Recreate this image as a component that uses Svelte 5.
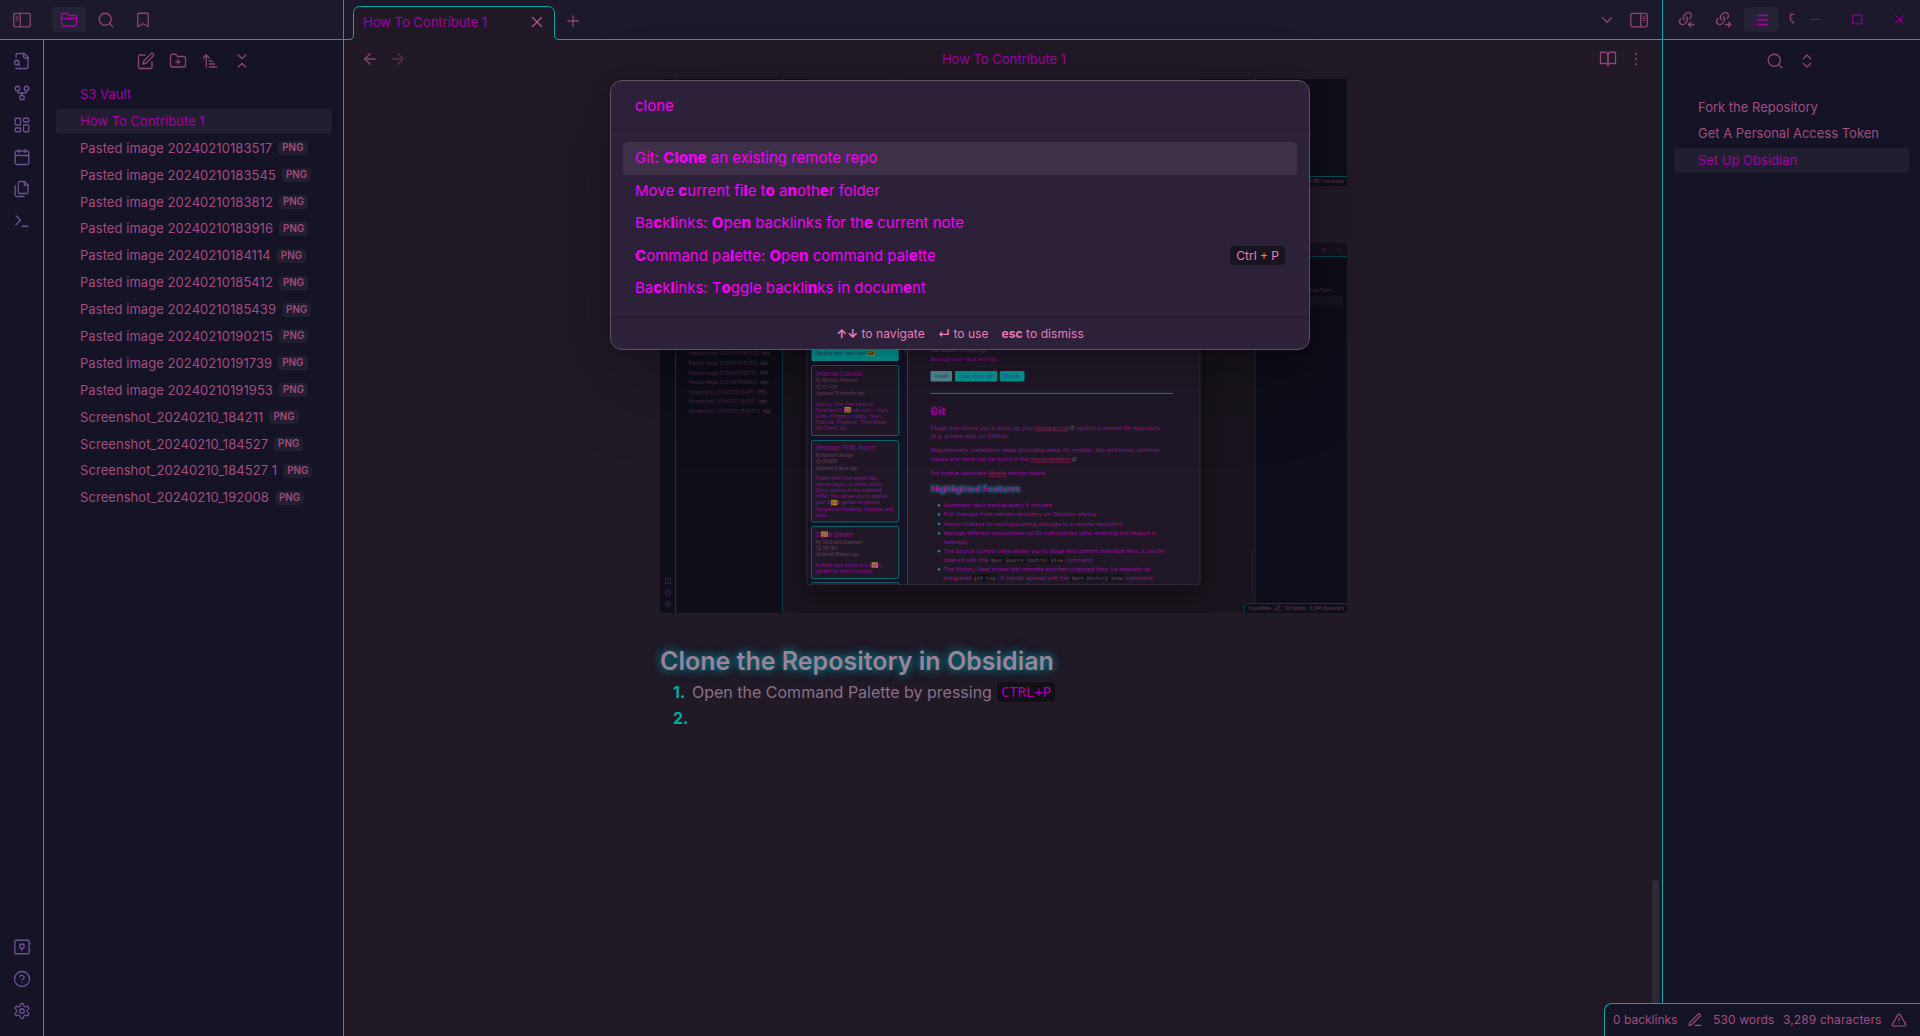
<script>
  const icons = {
    folder: ['M20 20a2 2 0 0 0 2-2V8a2 2 0 0 0-2-2h-7.9a2 2 0 0 1-1.69-.9L9.6 3.9A2 2 0 0 0 7.93 3H4a2 2 0 0 0-2 2v13a2 2 0 0 0 2 2Z', 'M2 10h20'],
    search: ['M11 3a8 8 0 1 0 0 16a8 8 0 1 0 0-16', 'm21 21-4.3-4.3'],
    bookmark: ['m19 21-7-4-7 4V5a2 2 0 0 1 2-2h10a2 2 0 0 1 2 2v16z'],
    fileSearch: ['M4 22h14a2 2 0 0 0 2-2V7l-5-5H6a2 2 0 0 0-2 2v3', 'M14 2v4a2 2 0 0 0 2 2h4', 'M5 11a3 3 0 1 0 0 6a3 3 0 1 0 0-6', 'm9 18-1.5-1.5'],
    fork: ['M12 15a3 3 0 1 0 0 6a3 3 0 1 0 0-6', 'M6 3a3 3 0 1 0 0 6a3 3 0 1 0 0-6', 'M18 3a3 3 0 1 0 0 6a3 3 0 1 0 0-6', 'M18 9v2c0 .6-.4 1-1 1H7c-.6 0-1-.4-1-1V9', 'M12 12v3'],
    dashboard: ['M4 3h5a1 1 0 0 1 1 1v7a1 1 0 0 1-1 1H4a1 1 0 0 1-1-1V4a1 1 0 0 1 1-1z', 'M15 3h5a1 1 0 0 1 1 1v3a1 1 0 0 1-1 1h-5a1 1 0 0 1-1-1V4a1 1 0 0 1 1-1z', 'M15 12h5a1 1 0 0 1 1 1v7a1 1 0 0 1-1 1h-5a1 1 0 0 1-1-1v-7a1 1 0 0 1 1-1z', 'M4 16h5a1 1 0 0 1 1 1v3a1 1 0 0 1-1 1H4a1 1 0 0 1-1-1v-3a1 1 0 0 1 1-1z'],
    calendar: ['M5 4h14a2 2 0 0 1 2 2v14a2 2 0 0 1-2 2H5a2 2 0 0 1-2-2V6a2 2 0 0 1 2-2z', 'M16 2v4', 'M8 2v4', 'M3 10h18'],
    files: ['M15.5 2H8.6c-.4 0-.8.2-1.1.5-.3.3-.5.7-.5 1.1v12.8c0 .4.2.8.5 1.1.3.3.7.5 1.1.5h9.8c.4 0 .8-.2 1.1-.5.3-.3.5-.7.5-1.1V6.5L15.5 2z', 'M3 7.6v12.8c0 .4.2.8.5 1.1.3.3.7.5 1.1.5h9.8', 'M15 2v5h5'],
    terminal: ['M4 17l6-6-6-6', 'M12 19h8'],
    vault: ['M4 3h16a1.5 1.5 0 0 1 1.500 1.500v15a1.500 1.500 0 0 1-1.500 1.500H4a1.500 1.500 0 0 1-1.500-1.500v-15A1.500 1.500 0 0 1 4 3z', 'M12 8a3 3 0 1 0 0 6a3 3 0 1 0 0-6', 'M12 14v3', 'M22.300 7v1', 'M22.300 16v1'],
    help: ['M12 2a10 10 0 1 0 0 20a10 10 0 1 0 0-20', 'M9.090 9a3 3 0 0 1 5.830 1c0 2-3 3-3 3', 'M12 17h.01'],
    settings: ['M12.220 2h-.44a2 2 0 0 0-2 2v.18a2 2 0 0 1-1 1.730l-.43.25a2 2 0 0 1-2 0l-.15-.08a2 2 0 0 0-2.730.730l-.22.38a2 2 0 0 0 .730 2.730l.15.1a2 2 0 0 1 1 1.720v.510a2 2 0 0 1-1 1.740l-.15.09a2 2 0 0 0-.730 2.730l.22.380a2 2 0 0 0 2.730.730l.15-.08a2 2 0 0 1 2 0l.43.25a2 2 0 0 1 1 1.730V20a2 2 0 0 0 2 2h.44a2 2 0 0 0 2-2v-.18a2 2 0 0 1 1-1.730l.43-.25a2 2 0 0 1 2 0l.15.08a2 2 0 0 0 2.730-.730l.22-.390a2 2 0 0 0-.730-2.730l-.15-.08a2 2 0 0 1-1-1.740v-.5a2 2 0 0 1 1-1.740l.15-.09a2 2 0 0 0 .730-2.730l-.22-.380a2 2 0 0 0-2.730-.730l-.15.08a2 2 0 0 1-2 0l-.43-.25a2 2 0 0 1-1-1.730V4a2 2 0 0 0-2-2z', 'M12 9a3 3 0 1 0 0 6a3 3 0 1 0 0-6'],
    edit: ['M11 4H4a2 2 0 0 0-2 2v14a2 2 0 0 0 2 2h14a2 2 0 0 0 2-2v-7', 'M18.5 2.5a2.120 2.120 0 0 1 3 3L12 15l-4 1 1-4Z'],
    folderPlus: ['M20 20a2 2 0 0 0 2-2V8a2 2 0 0 0-2-2h-7.9a2 2 0 0 1-1.690-.9L9.6 3.9A2 2 0 0 0 7.930 3H4a2 2 0 0 0-2 2v13a2 2 0 0 0 2 2Z', 'M12 10v6', 'M9 13h6'],
    sort: ['m3 8 4-4 4 4', 'M7 4v16', 'M11 12h4', 'M11 16h7', 'M11 20h10'],
    collapse: ['m7 20 5-5 5 5', 'm7 4 5 5 5-5'],
    expand: ['m7 15 5 5 5-5', 'm7 9 5-5 5 5'],
    close: ['M18 6 6 18', 'm6 6 12 12'],
    plus: ['M5 12h14', 'M12 5v14'],
    chevron: ['m6 9 6 6 6-6'],
    left: ['m12 19-7-7 7-7', 'M19 12H5'],
    right: ['M5 12h14', 'm12 5 7 7-7 7'],
    book: ['M2 3h6a4 4 0 0 1 4 4v14a3 3 0 0 0-3-3H2z', 'M22 3h-6a4 4 0 0 0-4 4v14a3 3 0 0 1 3-3h7z'],
    more: ['M12 5h.01', 'M12 12h.01', 'M12 19h.01'],
    linkIn: ['M8.705 12a5 5 0 0 1-.46-6.313l2.551-2.512a4.280 4.280 0 0 1 5.959.051a4.150 4.150 0 0 1 .052 5.869L15.901 10', 'M11.295 8a5 5 0 0 1 .46 6.313l-2.551 2.512a4.280 4.280 0 0 1-5.959-.051a4.150 4.150 0 0 1-.052-5.869L4.099 10', 'M17 21l-3-3 3-3', 'M21 18h-7'],
    linkOut: ['M8.705 12a5 5 0 0 1-.46-6.313l2.551-2.512a4.280 4.280 0 0 1 5.959.051a4.150 4.150 0 0 1 .052 5.869L15.901 10', 'M11.295 8a5 5 0 0 1 .46 6.313l-2.551 2.512a4.280 4.280 0 0 1-5.959-.051a4.150 4.150 0 0 1-.052-5.869L4.099 10', 'M18 15l3 3-3 3', 'M14 18h7'],
    list: ['M8 6h13', 'M8 12h13', 'M8 18h13', 'M3 6h.01', 'M3 12h.01', 'M3 18h.01'],
    tag: ['M14 4.500H6V10.500c0 .8.3 1.500.9 2.100L14 20'],
    minimize: ['M5 12h14'],
    maximize: ['M5 5h14v14H5z'],
    pen: ['M12 20h9', 'M16.500 3.500a2.120 2.120 0 0 1 3 3L7 19l-4 1 1-4Z'],
    warning: ['m21.730 18-8-14a2 2 0 0 0-3.480 0l-8 14A2 2 0 0 0 4 21h16a2 2 0 0 0 1.730-3Z', 'M12 9v4', 'M12 17h.01']
  };

  const files = [
    ['S3 Vault', 'note'],
    ['How To Contribute 1', 'note active'],
    ...['183517', '183545', '183812', '183916', '184114', '185412', '185439', '190215', '191739', '191953'].map((n) => ['Pasted image 20240210' + n, 'png']),
    ...['184211', '184527', '184527 1', '192008'].map((n) => ['Screenshot_20240210_' + n, 'png'])
  ];

  // Fragments wrapped in asterisks are the matched letters.
  const commands = [
    'Git: *Clone* an existing remote repo',
    'Move *c*urrent fi*l*e t*o* a*n*oth*e*r folder',
    'Ba*c*k*l*inks: *O*pe*n* backlinks for th*e* current note',
    '*C*ommand pa*l*ette: *O*pe*n* command pal*e*tte',
    'Ba*c*k*l*inks: T*o*ggle backli*n*ks in docum*e*nt'
  ];

  const rose = '#733c62', violet = '#960b9b', dim = '#4a2844';

  // [x, baseline, width, size, fill, text]
  const cardText = [
    [815.7, 355.4, 59, 4.9, '#104f60', 'Backup your vault with Git.'],
    [815.7, 375.600, 47.500, 5.7, violet, 'Heatmap Calendar'],
    [815.7, 382.400, 42, 4.7, rose, 'By Richard Slettevoll'],
    [822.5, 388.700, 14.700, 4.7, rose, '52,459'],
    [815.7, 395, 49, 4.7, rose, 'Updated 10 months ago'],
    [815.7, 405.800, 57.600, 4.7, violet, 'Activity Year Overview for'],
    [815.7, 411.800, 72.600, 4.7, violet, 'DataviewJS, Github style – Track'],
    [815.7, 417.800, 67, 4.7, violet, 'Goals, Progress, Habits, Tasks,'],
    [815.7, 423.800, 70, 4.7, violet, 'Exercise, Finances, "Dont Break'],
    [815.7, 429.800, 32, 4.7, violet, 'the Chain" etc.'],
    [815.7, 450.200, 59.500, 5.7, violet, 'Webpage HTML Export'],
    [815.7, 456.800, 37.500, 4.7, rose, 'By Nathan George'],
    [822.5, 463.200, 14.700, 4.7, rose, '28,899'],
    [815.7, 469.600, 41.500, 4.7, rose, 'Updated 6 days ago'],
    [815.7, 480.200, 62.500, 4.7, violet, 'Export html from single files,'],
    [815.7, 486.300, 67, 4.7, violet, 'canvas pages, or whole vaults.'],
    [815.7, 492.300, 66, 4.7, violet, 'Direct access to the exported'],
    [815.7, 498.300, 71.500, 4.7, violet, 'HTML files allows you to publish'],
    [815.7, 504.400, 65, 4.7, violet, 'your digital garden anywhere.'],
    [815.7, 510.500, 77.500, 4.7, violet, 'Focuses on flexibility, features, and'],
    [815.7, 516.700, 14, 4.7, violet, 'style...'],
    [815.7, 536.700, 37, 5.7, violet, 'Digital Garden'],
    [815.7, 543.500, 47, 4.7, rose, 'By Ole Eskild Steensen'],
    [822.5, 549.600, 14.700, 4.7, rose, '28,794'],
    [815.7, 556, 43.500, 4.7, rose, 'Updated 18 days ago'],
    [815.7, 567, 66, 4.7, violet, 'Publish your notes to a digital'],
    [815.7, 573, 57.500, 4.7, violet, 'garden for others to enjoy.']
  ];
  const detailText = [
    [930.5, 351.600, 56, 4.7, rose, 'Last update: 32 days ago'],
    [930.5, 361.300, 68, 5.2, violet, 'Backup your vault with Git.'],
    [935, 378, 13, 4.4, '#164555', 'Install'],
    [958.7, 378, 35, 4.4, '#56349b', 'Copy share link'],
    [1003.700, 378, 16.500, 4.4, '#56349b', 'Donate'],
    [930.5, 429.700, 103, 5.4, violet, 'Plugin that allows you to back up your'],
    [1034.700, 429.700, 33.500, 5.4, '#951c55', 'Obsidian.md'],
    [1076, 429.700, 84, 5.4, violet, 'vault to a remote Git repository'],
    [930.5, 438.300, 78.500, 5.4, violet, '(e.g. private repo on GitHub).'],
    [930.5, 452.400, 229.500, 5.4, violet, 'Requirements, installation steps (including setup for mobile), tips and tricks, common'],
    [930.5, 461.200, 98, 5.4, violet, 'issues and more can be found in the'],
    [1030.300, 461.200, 40.700, 5.4, '#951c55', 'documentation'],
    [1076.300, 461.200, 1.500, 5.4, violet, '.'],
    [930.5, 475.300, 56, 5.4, violet, 'For mobile users see'],
    [988, 475.300, 18, 5.4, '#951c55', 'Mobile'],
    [1008, 475.300, 38.500, 5.4, violet, 'section below.'],
    [943.4, 507, 108.500, 5.4, violet, 'Automatic vault backup every X minutes'],
    [943.4, 516.300, 153.500, 5.4, violet, 'Pull changes from remote repository on Obsidian startup'],
    [943.4, 525.500, 179, 5.4, violet, 'Assign hotkeys for pulling/pushing changes to a remote repository'],
    [943.4, 535, 213, 5.4, violet, 'Manage different repositories via Git submodules (after enabling this feature in'],
    [943.4, 543.600, 24, 5.4, violet, 'settings)'],
    [943.4, 553, 221, 5.4, violet, 'The Source Control View allows you to stage and commit individual files. It can be'],
    [943.4, 561.600, 44.500, 5.4, violet, 'opened with the'],
    [1065.500, 561.600, 28, 5.4, violet, 'command.'],
    [943.4, 570.800, 207.500, 5.4, violet, 'The History View shows the commits and their changed files. So basically an'],
    [943.4, 579.500, 28, 5.4, violet, 'integrated'],
    [997, 579.500, 71.500, 5.4, violet, '. It can be opened with the'],
    [1126, 579.500, 28, 5.4, violet, 'command.']
  ];
  const codeText = [
    [990, 561.600, 73, 'Open Source Control View'],
    [973.500, 579.500, 22, 'git log'],
    [1071.500, 579.500, 51.500, 'Open History View']
  ];
  const sideText = [
    [353.5, 70, 'Pasted image 20240210185439'],
    [363.3, 68, 'Pasted image 20240210190215'],
    [372.8, 68, 'Pasted image 20240210191739'],
    [382.4, 68, 'Pasted image 20240210191953'],
    [392, 66, 'Screenshot_20240210_184211'],
    [401.7, 67, 'Screenshot_20240210_184527'],
    [411.2, 71, 'Screenshot_20240210_184527 1']
  ];
  const marks = [[867, 350.700, 8], [844.300, 407, 6.500], [831, 499.800, 6.500], [821, 531.500, 7], [871.500, 562.300, 6.500]];
  const cards = [[365.5, 70], [440.5, 81.500], [526.5, 52], [583.300, 12]];
  const bullets = [505.200, 514.500, 523.800, 533.300, 551.300, 569.200];
</script>

{#snippet icon(name, cls = '')}
  <svg class="icon {cls}" viewBox="0 0 24 24">
    {#each icons[name] as d}<path {d} />{/each}
  </svg>
{/snippet}

{#snippet label(t)}
  <text x={t[0]} y={t[1]} textLength={t[2]} lengthAdjust="spacingAndGlyphs" font-size={t[3]} fill={t[4]}>{t[5]}</text>
{/snippet}

{#snippet sidebarIcon(cls)}
  <svg class="toggle {cls}" viewBox="0 0 18 16">
    <rect x=".8" y="1.3" width="16.400" height="13.500" rx="1.800" />
    <path d="M7.300 1.300v13.500" />
    <path class="ticks" d="M2.600 4.200h2.800M2.600 6.400h2.800M2.600 8.600h2.800" />
  </svg>
{/snippet}

<div class="app">
  <aside class="left">
    <div class="topbar">
      <span class="toggle-slot">{@render sidebarIcon('')}</span>
      <span class="top-btn on">{@render icon('folder')}</span>
      <span class="top-btn">{@render icon('search')}</span>
      <span class="top-btn">{@render icon('bookmark')}</span>
    </div>
    <div class="left-body">
      <nav class="ribbon">
        {#each ['fileSearch', 'fork', 'dashboard', 'calendar', 'files', 'terminal'] as n}{@render icon(n)}{/each}
        <span class="spring"></span>
        {#each ['vault', 'help', 'settings'] as n}{@render icon(n)}{/each}
      </nav>
      <div class="explorer">
        <div class="tools">
          {#each ['edit', 'folderPlus', 'sort', 'collapse'] as n}{@render icon(n)}{/each}
        </div>
        {#each files as [name, kind]}
          <div class="file {kind}"><span>{name}</span>{#if kind === 'png'}<span class="tag">PNG</span>{/if}</div>
        {/each}
      </div>
    </div>
  </aside>

  <main>
    <div class="tabbar">
      <div class="tab">
        <svg class="outline" viewBox="0 0 214 34">
          <path class="fill" d="M0 34C4 34 6.500 32 6.500 28V8.500a8 8 0 0 1 8-8h185a8 8 0 0 1 8 8V28c0 4 2.500 6 6.500 6z" />
          <path class="line" d="M0 33.500h2c3 0 4.500-1.500 4.500-4.500V6.500a6 6 0 0 1 6-6h189a6 6 0 0 1 6 6V29c0 3 1.500 4.500 4.500 4.500h2" />
        </svg>
        <span class="tab-title">How To Contribute 1</span>
        {@render icon('close')}
      </div>
      <span class="new">{@render icon('plus')}</span>
      <span class="spring"></span>
      {@render icon('chevron', 'drop')}
      {@render sidebarIcon('flip')}
    </div>
    <div class="view-header">
      {@render icon('left')}
      {@render icon('right', 'faded')}
      <span class="view-title">How To Contribute 1</span>
      {@render icon('book')}
      {@render icon('more', 'dots')}
    </div>
    <div class="content">
      <svg class="shot" width="687" height="107" viewBox="660 79 687 107">
        <rect x="660" y="79" width="687" height="107" fill="#0f0f1a" />
        <rect x="807" y="79" width="393" height="107" fill="#1f1827" />
        <path d="M675.500 79v107M782.500 79v107M896 79v107M1255 79v107" stroke="#0b4a50" />
        <rect x="1244" y="176.500" width="110" height="14" fill="#100e18" stroke="#0b4a50" />
        <text x="1309" y="183" textLength="35" font-size="4.500" fill="#69385a">2,997 characters</text>
      </svg>
      <svg class="shot second" width="687" height="370" viewBox="660 243 687 370">
        <defs>
          <filter id="soft" x="-30%" y="-30%" width="160%" height="160%"><feGaussianBlur stdDeviation="12" /></filter>
          <filter id="glow" x="-20%" y="-60%" width="140%" height="220%"><feGaussianBlur stdDeviation="1.500" /></filter>
        </defs>
        <rect x="660" y="243" width="687" height="370" fill="#18131c" />
        <rect x="660" y="243" width="122" height="370" fill="#0f0e19" />
        <rect x="1255" y="243" width="92" height="370" fill="#0e0d19" />
        <rect x="660" y="243" width="687" height="13.500" fill="#14111d" />
        <path d="M660 256.500h687" stroke="#0b3d46" />
        <path d="M675.500 256v357M782.500 243v370" stroke="#0a3a42" />
        <path d="M1255 243v370" stroke="#102630" stroke-width="1.500" />
        <path d="M1309 250h3M1322.500 248.500h3.500v3.500h-3.500zM1337.500 248.500l3.500 3.500M1341 248.500l-3.500 3.500" stroke="#4a1355" fill="none" stroke-width=".8" />
        <text x="1285" y="292" textLength="47" font-size="4.700" fill={dim}>Personal Access Token</text>
        <rect x="1258" y="296" width="85" height="9" rx="1.500" fill="#15141f" />
        {#each sideText as [y, w, t]}
          <text x="688.700" y={y + 1.7} textLength={w} font-size="4.700" fill={dim}>{t}</text>
          <rect x={688.700 + w + 2.300} y={y - 2.500} width="9.800" height="5" rx="1" fill="#15141e" />
          <text x={688.700 + w + 3.500} y={y + 1.3} textLength="7.500" font-size="3.600" font-weight="600" fill={dim}>PNG</text>
        {/each}
        <g fill="none" stroke="#352748" stroke-width=".8">
          <rect x="665.500" y="578.500" width="5" height="5" /><path d="M668 580v2" />
          <circle cx="668" cy="592.500" r="3" /><path d="M667.200 591.800q1-1.500 1.600 0t-.8 1.200" />
          <circle cx="668" cy="604" r="2.500" /><circle cx="668" cy="604" r="1" />
        </g>
        <rect x="807" y="262" width="393" height="330" fill="#08060c" opacity=".35" filter="url(#soft)" />
        <rect x="807" y="270" width="393" height="314.500" rx="2.500" fill="#201827" stroke="#302833" />
        <path d="M807.500 270h100v314h-98q-2 0-2-2z" fill="#161228" />
        <path d="M907.500 270v314" stroke="#0c5560" />
        <rect x="904" y="340" width="2.500" height="14" rx="1" fill="#292337" />
        <rect x="811.500" y="330" width="87.200" height="31" rx="1.500" fill="#059b98" />
        {#each cards as [y, h], i}
          {#if i < 3}
            <rect x="811.500" {y} width="87.200" height={h} rx="1.500" fill="#201827" stroke="#0b646a" />
          {:else}
            <path d="M811.500 584.500v-1q0-.8 1-.8h85.200q1 0 1 .8v1" fill="#201827" stroke="#0b646a" />
          {/if}
        {/each}
        {#each marks as [x, y, w]}<rect {x} {y} width={w} height="5.500" fill="#a98a18" />{/each}
        <path d="M817 385.500h3l1.500 1.500-2.500 2.300-2.500-2.300zM817 460h3l1.500 1.500-2.500 2.300-2.500-2.300zM817 546.500h3l1.500 1.500-2.500 2.300-2.500-2.300z" fill="none" stroke={rose} stroke-width=".7" />
        {#each cardText as t}{@render label(t)}{/each}
        <text x="867.500" y="355.400" textLength="6.800" font-size="4.900" font-weight="600" fill="#5a3a10">Git</text>
        <rect x="930.500" y="371" width="21.500" height="10.600" rx="1" fill="#568c98" />
        <rect x="955" y="371" width="42" height="10.600" rx="1" fill="#059b98" />
        <rect x="1000" y="371" width="24.500" height="10.600" rx="1" fill="#059b98" />
        <path d="M930.500 393.400h242.500" stroke="#058a8a" />
        <g font-weight="700">
          <text x="930.500" y="415" textLength="15" font-size="10" fill="#a400a8" opacity=".7" filter="url(#glow)">Git</text>
          <text x="930.500" y="415" textLength="15" font-size="10" fill="#a400a8">Git</text>
          <text x="930.500" y="492.400" textLength="89.500" font-size="9" fill="#00a0a5" filter="url(#glow)">Highlighted Features</text>
          <text x="930.500" y="492.400" textLength="89.500" font-size="9" font-weight="600" fill={violet}>Highlighted Features</text>
        </g>
        {#each detailText as t}{@render label(t)}{/each}
        <path d="M1034.700 430.800h34M1030.300 462.300h41M988 476.400h18.500" stroke="#951c55" stroke-width=".6" />
        <path d="M1070.500 426.500h2M1070.500 426.500v3h3v-1.500M1072 428l2-2M1072.500 426h1.500v1.500M1072.500 458h2M1072.500 458v3h3v-1.500M1074 459.500l2-2M1074.500 457.500h1.500v1.500" fill="none" stroke="#4f6563" stroke-width=".6" />
        {#each bullets as y}<circle cx="939" cy={y} r="1.200" fill="#0a9296" />{/each}
        {#each codeText as [x, y, w, t]}
          <rect x={x - 1.500} y={y - 5.300} width={w + 2.500} height="7.200" rx="1" fill="#151219" />
          <text class="mono" {x} {y} textLength={w} lengthAdjust="spacingAndGlyphs" font-size="4.900" fill="#84506c">{t}</text>
        {/each}
        <rect x="1251" y="549" width="2.500" height="48" fill="#1f1822" />
        <path d="M1244.500 613v-7q0-2.500 2.500-2.500h101v10" fill="#100e18" stroke="#0b3d46" />
        <g font-size="4.400" fill={rose}>
          <text x="1248.300" y="609.700" textLength="22.700">0 backlinks</text>
          <text x="1284.500" y="609.700" textLength="21.500">503 words</text>
          <text x="1309.300" y="609.700" textLength="34.700">3,094 characters</text>
        </g>
        <path d="M1275.500 610l.5-1.800 3-3 1.200 1.200-3 3zM1278.500 610.300h2.500" fill="none" stroke={rose} stroke-width=".7" />
      </svg>
      <h2>Clone the Repository in Obsidian</h2>
      <ol>
        <li><b>1.</b><span>Open the Command Palette by pressing</span> <code>CTRL+P</code></li>
        <li><b>2.</b></li>
      </ol>
      <div class="thumb"></div>
    </div>
  </main>

  <aside class="right">
    <div class="topbar">
      <span class="top-btn">{@render icon('linkIn')}</span>
      <span class="top-btn">{@render icon('linkOut')}</span>
      <span class="top-btn on">{@render icon('list')}</span>
      <span class="cut">{@render icon('tag')}</span>
      <span class="win">{@render icon('minimize')}</span>
      <span class="win">{@render icon('maximize')}</span>
      <span class="win">{@render icon('close')}</span>
    </div>
    <div class="outline-pane">
      <div class="tools">{@render icon('search')}{@render icon('expand')}</div>
      <div class="file">Fork the Repository</div>
      <div class="file">Get A Personal Access Token</div>
      <div class="file active">Set Up Obsidian</div>
    </div>
  </aside>

  <footer class="status">
    <span class="s1">0 backlinks</span>
    {@render icon('pen', 'pen')}
    <span class="s2">530 words</span>
    <span class="s3">3,289 characters</span>
    {@render icon('warning')}
  </footer>

  <div class="palette">
    <div class="query">clone</div>
    <div class="results">
      {#each commands as c, i}
        <div class="cmd" class:selected={i === 0}>
          <span>{#each c.split('*') as part, k}{#if k % 2}<b>{part}</b>{:else}{part}{/if}{/each}</span>
          {#if i === 3}<kbd>Ctrl + P</kbd>{/if}
        </div>
      {/each}
    </div>
    <div class="hints">
      <span><b>↑↓</b> to navigate</span>
      <span><b>↵</b> to use</span>
      <span><b>esc</b> to dismiss</span>
    </div>
  </div>
</div>

<style>
  :global(body) { background: #211926; }
  .app {
    position: relative;
    display: flex;
    height: 1036px;
    overflow: hidden;
    background: #211926;
    color: #a34c80;
    font: 13px/1.3 Inter, sans-serif;
  }
  .icon {
    width: 18px;
    height: 18px;
    flex: none;
    fill: none;
    stroke: currentColor;
    stroke-width: 1.75;
    stroke-linecap: round;
    stroke-linejoin: round;
  }
  .spring { flex: 1; }
  aside { background: #151326; }
  .left { width: 343px; border-right: 1px solid #00a9a7; display: flex; flex-direction: column; }
  .right { width: 257px; border-left: 1px solid #00a9a7; }
  .topbar {
    display: flex;
    align-items: center;
    height: 39px;
    border-bottom: 1px solid #00a9a7;
    background: #1d192d;
    color: #8b4376;
  }
  .toggle { width: 18px; height: 16px; fill: none; stroke: #8b4376; stroke-width: 1.3; flex: none; }
  .toggle .ticks { stroke-width: 1; }
  .flip { transform: scaleX(-1); }
  .toggle-slot { width: 52px; display: flex; padding-left: 13px; box-sizing: border-box; }
  .top-btn { width: 34px; height: 25px; margin-right: 3px; border-radius: 4px; display: grid; place-items: center; }
  .on { background: #252236; color: #a700aa; }
  .left-body { flex: 1; display: flex; }
  .ribbon {
    width: 43px;
    border-right: 1px solid #00a9a7;
    display: flex;
    flex-direction: column;
    align-items: center;
    gap: 14px;
    padding: 12px 0 16px;
    box-sizing: content-box;
    height: 968px;
    color: #6c5091;
  }
  .explorer { flex: 1; padding: 12px 11px 0 12px; }
  .tools { display: flex; justify-content: center; gap: 14px; color: #8b4376; }
  .explorer .tools { padding: 0 0 12px; }
  .file {
    display: flex;
    align-items: center;
    gap: 6px;
    height: 16.9px;
    padding: 4px 0 4px 24px;
    margin-bottom: 2px;
    border-radius: 4px;
    white-space: nowrap;
  }
  .png { letter-spacing: .06px; }
  .note { letter-spacing: .03px; }
  .note, .active { color: #a000a4; }
  .active { background: #201e30; }
  .tag {
    padding: 1px 4px;
    border-radius: 4px;
    background: #201e2f;
    font-size: 9.750px;
    line-height: 12px;
    font-weight: 600;
    letter-spacing: .1px;
  }
  main { width: 1318px; display: flex; flex-direction: column; }
  .tabbar { display: flex; align-items: center; height: 40px; box-sizing: border-box; border-bottom: 1px solid #00a9a7; background: #1d192d; color: #8b4376; padding-right: 14px; }
  .tab { position: relative; display: flex; align-items: center; width: 214px; height: 34px; margin: 6px 0 0 3px; padding: 0 18px 0 16px; box-sizing: border-box; color: #a85a90; flex: none; align-self: flex-start; }
  .tab .icon { position: relative; width: 18px; height: 18px; margin: -2px -3px 0 0; }
  .outline { position: absolute; left: 0; top: 0; width: 214px; height: 34px; }
  .fill { fill: #211926; }
  .line { fill: none; stroke: #00a9a7; }
  .tab-title { position: relative; flex: 1; margin-top: -1px; color: #a000a4; }
  .new { margin: 2px 0 0 3px; display: flex; }
  .tabbar .drop { margin-right: 14px; }
  .view-header { display: flex; align-items: center; height: 39px; padding: 0 17px; gap: 10px; color: #8b4376; flex: none; box-sizing: border-box; padding-bottom: 1px; }
  .faded { opacity: .5; }
  .view-title { flex: 1; padding-left: 2px; text-align: center; color: #a000a4; }
  .dots { stroke-width: 2.8; }
  .content { position: relative; flex: 1; padding-left: 316px; overflow: hidden; }
  .shot { display: block; font-family: Inter, sans-serif; }
  .second { margin-top: 57px; }
  .mono { font-family: 'DejaVu Sans Mono', monospace; }
  h2 {
    margin: 31px 0 0;
    color: #9a829b;
    font-size: 25px;
    line-height: 34px;
    font-weight: 600;
    text-shadow: 0 0 8px #067f8a, 0 0 12px #065f6c;
  }
  ol { margin: 0; padding: 1px 0 0 13px; list-style: none; color: #877088; font-size: 16px; }
  li { display: flex; align-items: center; height: 26px; }
  li b { width: 19px; color: #00a9a7; }
  code { margin-left: 5px; padding: 0 4px; border-radius: 4px; background: #121015; color: #a700aa; font: 13.900px/20px 'DejaVu Sans Mono', monospace; }
  .thumb { position: absolute; right: 3px; top: 801px; width: 7px; height: 160px; border-radius: 4px; background: #2f2836; }
  .right .topbar { padding-left: 7px; }
  .cut { width: 8px; margin-left: 5px; margin-right: 0; overflow: hidden; display: flex; height: 18px; }
  .win { width: 42px; display: grid; place-items: center; color: #98009c; }
  .win .icon { width: 15px; height: 15px; stroke-width: 1.600; }
  .outline-pane { padding: 12px 11px 0; }
  .outline-pane .tools { padding: 0 2px 24.500px 0; }
  .status {
    position: absolute;
    right: 0;
    bottom: 0;
    width: 316px;
    height: 33px;
    box-sizing: border-box;
    display: flex;
    align-items: center;
    padding: 0 13px 0 8px;
    border: solid #00a9a7;
    border-width: 1px 0 0 1px;
    border-top-left-radius: 8px;
    background: #151326;
    font-size: 12px;
    white-space: nowrap;
  }
  .s1 { width: 74px; }
  .pen { margin-right: 10px; }
  .status .icon { width: 16px; height: 16px; }
  .s2 { width: 70px; letter-spacing: .12px; }
  .s3 { flex: 1; letter-spacing: .12px; }
  .palette {
    position: absolute;
    left: 610px;
    top: 80px;
    width: 700px;
    height: 270px;
    box-sizing: border-box;
    border: 1px solid #59535a;
    border-radius: 12px;
    background: #2c2139;
    color: #f300f3;
    font-size: 15px;
    box-shadow: 0 2px 7px rgba(0, 0, 0, .07), 0 6px 25px rgba(0, 0, 0, .11), 0 30px 90px rgba(0, 0, 0, .2);
  }
  .query { height: 48px; line-height: 50px; padding-left: 24px; border-bottom: 1px solid #1f1835; }
  .results { padding: 12px; height: 163px; }
  .cmd { display: flex; justify-content: space-between; align-items: center; height: 31.500px; padding: 0 12px 1px; border-radius: 4px; }
  .cmd b { font-weight: 800; }
  .selected { background: #3d3048; }
  kbd { margin-top: 1px; padding: 0 6px; border-radius: 4px; background: #181520; color: #f57abc; font: 12px/19px Inter, sans-serif; }
  .hints { display: flex; justify-content: center; gap: 13px; height: 31px; line-height: 31px; border-top: 1px solid #1f1835; color: #e97bb8; font-size: 12px; letter-spacing: .06px; }
</style>
